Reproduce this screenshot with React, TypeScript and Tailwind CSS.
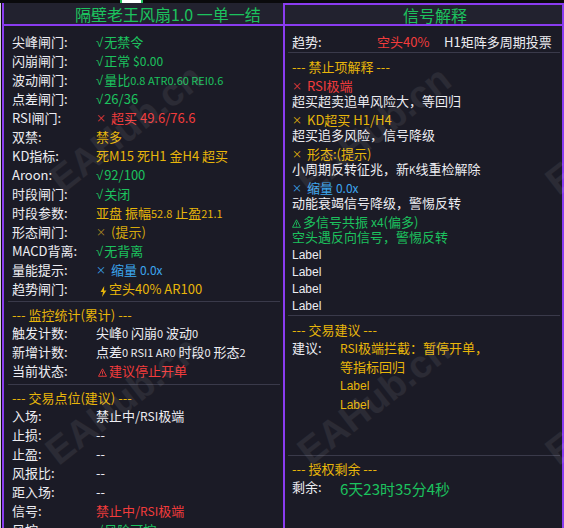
import React from 'react';

const WHITE = 'text-[#ededf2]';
const GREEN = 'text-[#1cc25e]';
const RED = 'text-[#f23c3c]';
const GOLD = 'text-[#e8b60a]';
const BLUE = 'text-[#3ba6ee]';

function X({ className = '' }: { className?: string }) {
  return <span className={`mr-[5px] text-[10px] ${className}`}>×</span>;
}

// thin radical-style check, as the terminal font draws it
function Ok() {
  return <span className="mr-px font-['Liberation_Sans',sans-serif] text-[13px]">√</span>;
}

function Warn({ className = '' }: { className?: string }) {
  return (
    <svg width="9" height="9" viewBox="0 0 9 9" className={`mr-[2px] translate-y-[2px] ${className}`}>
      <path d="M4.5 0.8 L8.5 8.3 H0.5 Z" fill="none" stroke="currentColor" strokeWidth="0.9" />
      <path d="M4.5 3.3 V6" stroke="currentColor" strokeWidth="0.9" />
      <circle cx="4.5" cy="7.1" r="0.5" fill="currentColor" />
    </svg>
  );
}

function Bolt() {
  return (
    <svg width="7" height="11" viewBox="0 0 7 11" className="ml-[4px] mr-[2px] translate-y-[3px]">
      <path d="M4.2 0 L0.6 6 H3 L2 11 L6.4 4.4 H4 Z" fill="#e8b60a" />
    </svg>
  );
}

function Row({ label, children }: { label: string; children: React.ReactNode }) {
  return (
    <div className="flex h-[19px] items-center pl-[8px]">
      <span className={`w-[84px] shrink-0 ${WHITE}`}>{label}</span>
      <div className="flex items-center whitespace-nowrap">{children}</div>
    </div>
  );
}

function SecHead({ children, pl = 'pl-[8px]' }: { children: React.ReactNode; pl?: string }) {
  return <div className={`flex h-[17px] items-center ${pl} ${GOLD}`}>{children}</div>;
}

function Watermark({ pos }: { pos: string }) {
  return (
    <span
      className={`absolute ${pos} -translate-x-1/2 -translate-y-1/2 -rotate-[38deg] whitespace-nowrap font-['Liberation_Sans',sans-serif] text-[38px] font-bold text-white/[0.07]`}
    >
      EAHub.cn
    </span>
  );
}

function LeftPanel() {
  return (
    <div className="w-[283px] overflow-hidden border-x-2 border-[#8a3cf0] bg-[#1b1b26]">
      <div className="flex h-[23px] items-center border-b-2 border-[#8a3cf0] bg-[#22222f] pl-[71px] text-[16px] text-[#1cc25e]">
        隔壁老王风扇1.0 一单一结
      </div>
      <div className="pt-[6px]">
        <Row label="尖峰闸门:">
          <span className={GREEN}>
            <Ok />
            无禁令
          </span>
        </Row>
        <Row label="闪崩闸门:">
          <span className={GREEN}>
            <Ok />
            正常 <span className="text-[12px]">$0.00</span>
          </span>
        </Row>
        <Row label="波动闸门:">
          <span className={GREEN}>
            <Ok />
            量比<span className="text-[11px]">0.8 ATR0.60 REI0.6</span>
          </span>
        </Row>
        <Row label="点差闸门:">
          <span className={GREEN}>
            <Ok />
            26/36
          </span>
        </Row>
        <Row label="RSI闸门:">
          <X className={RED} />
          <span className={RED}>超买 49.6/76.6</span>
        </Row>
        <Row label="双禁:">
          <span className={GOLD}>禁多</span>
        </Row>
        <Row label="KD指标:">
          <span className={GOLD}>死M15 死H1 金H4 超买</span>
        </Row>
        <Row label="Aroon:">
          <span className={GREEN}>
            <Ok />
            92/100
          </span>
        </Row>
        <Row label="时段闸门:">
          <span className={GREEN}>
            <Ok />
            关闭
          </span>
        </Row>
        <Row label="时段参数:">
          <span className={GOLD}>
            亚盘 振幅<span className="text-[11px]">52.8</span> 止盈<span className="text-[11px]">21.1</span>
          </span>
        </Row>
        <Row label="形态闸门:">
          <X className="text-[#b08c20]" />
          <span className="text-[#d6a90c]">(提示)</span>
        </Row>
        <Row label="MACD背离:">
          <span className={GREEN}>
            <Ok />
            无背离
          </span>
        </Row>
        <Row label="量能提示:">
          <X className={BLUE} />
          <span className={BLUE}>
            缩量 <span className="text-[12px]">0.0x</span>
          </span>
        </Row>
        <Row label="趋势闸门:">
          <Bolt />
          <span className={GOLD}>空头40% AR100</span>
        </Row>
      </div>
      <div className="mb-[4px] ml-[4px] mr-[3px] mt-[3px] h-px bg-[#3a3a4a]" />
      <SecHead>--- 监控统计(累计) ---</SecHead>
      <Row label="触发计数:">
        <span className={WHITE}>
          尖峰<span className="text-[11px]">0</span> 闪崩<span className="text-[11px]">0</span> 波动
          <span className="text-[11px]">0</span>
        </span>
      </Row>
      <Row label="新增计数:">
        <span className={WHITE}>
          点差<span className="text-[11px]">0 RSI1 AR0</span> 时段<span className="text-[11px]">0</span> 形态
          <span className="text-[11px]">2</span>
        </span>
      </Row>
      <Row label="当前状态:">
        <Warn className="ml-[2px] text-[#f23c3c]" />
        <span className={RED}>建议停止开单</span>
      </Row>
      <div className="mb-[4px] ml-[4px] mr-[3px] mt-[4px] h-px bg-[#3a3a4a]" />
      <SecHead>--- 交易点位(建议) ---</SecHead>
      <Row label="入场:">
        <span className={WHITE}>
          禁止中/<span className="text-[12px]">RSI</span>极端
        </span>
      </Row>
      <Row label="止损:">
        <span className={WHITE}>--</span>
      </Row>
      <Row label="止盈:">
        <span className={WHITE}>--</span>
      </Row>
      <Row label="风报比:">
        <span className={WHITE}>--</span>
      </Row>
      <Row label="距入场:">
        <span className={WHITE}>--</span>
      </Row>
      <Row label="信号:">
        <span className={RED}>
          禁止中/<span className="text-[12px]">RSI</span>极端
        </span>
      </Row>
      <Row label="风控:">
        <span className={GREEN}>
          <Ok />
          风险可控
        </span>
      </Row>
    </div>
  );
}

function Block({ title, desc }: { title: React.ReactNode; desc: React.ReactNode }) {
  return (
    <div className="mt-[4px] first:mt-0">
      <div className="flex h-[15px] items-center whitespace-nowrap">{title}</div>
      <div className="flex h-[15px] items-center whitespace-nowrap">{desc}</div>
    </div>
  );
}

function RightPanel() {
  return (
    <div className="w-[279px] overflow-hidden border-r-2 border-[#8a3cf0] bg-[#1b1b26]">
      <div className="flex h-[23px] items-center border-y-2 border-[#8a3cf0] bg-[#22222f] pl-[118px] text-[16px] text-[#1cc25e]">
        信号解释
      </div>
      <div className="pt-[6px]">
        <div className="flex h-[18px] items-center pl-[7px]">
          <span className={`w-[85px] shrink-0 ${WHITE}`}>趋势:</span>
          <span className={`w-[67px] shrink-0 ${RED}`}>空头40%</span>
          <span className={WHITE}>H1矩阵多周期投票</span>
        </div>
      </div>
      <div className="mb-[5px] ml-[3px] mr-[2px] mt-[2px] h-px bg-[#3a3a4a]" />
      <SecHead pl="pl-[7px]">--- 禁止项解释 ---</SecHead>
      <div className="mt-[3px] pl-[7px]">
        <Block
          title={
            <>
              <X className={RED} />
              <span className={RED}>RSI极端</span>
            </>
          }
          desc={<span className={WHITE}>超买超卖追单风险大，等回归</span>}
        />
        <Block
          title={
            <>
              <X className={GOLD} />
              <span className={GOLD}>KD超买 H1/H4</span>
            </>
          }
          desc={<span className={WHITE}>超买追多风险，信号降级</span>}
        />
        <Block
          title={
            <>
              <X className={GOLD} />
              <span className={GOLD}>形态:(提示)</span>
            </>
          }
          desc={
            <span className={WHITE}>
              小周期反转征兆，新<span className="text-[10px]">K</span>线重检解除
            </span>
          }
        />
        <Block
          title={
            <>
              <X className={BLUE} />
              <span className={BLUE}>
                缩量 <span className="text-[12px]">0.0x</span>
              </span>
            </>
          }
          desc={<span className={WHITE}>动能衰竭信号降级，警惕反转</span>}
        />
        <Block
          title={
            <>
              <Warn className="text-[#1cc25e]" />
              <span className={GREEN}>
                多信号共振 <span className="text-[12px]">x4</span>(偏多)
              </span>
            </>
          }
          desc={<span className={GREEN}>空头遇反向信号，警惕反转</span>}
        />
      </div>
      <div className="mt-[2px] pl-[7px] font-['Liberation_Sans',sans-serif] text-[12px]">
        {[0, 1, 2, 3].map((i) => (
          <div key={i} className={`flex h-[17px] items-center ${WHITE}`}>
            Label
          </div>
        ))}
      </div>
      <div className="mb-[5px] ml-[3px] mr-[2px] mt-[1px] h-px bg-[#3a3a4a]" />
      <SecHead pl="pl-[7px]">--- 交易建议 ---</SecHead>
      <div className="flex pl-[7px]">
        <span className={`flex h-[19px] w-[48px] shrink-0 items-center ${WHITE}`}>建议:</span>
        <div className={GOLD}>
          <div className="flex h-[19px] items-center whitespace-nowrap">
            <span className="text-[12px]">RSI</span>极端拦截：暂停开单，
          </div>
          <div className="flex h-[19px] items-center">等指标回归</div>
          <div className="flex h-[19px] items-center font-['Liberation_Sans',sans-serif] text-[12px]">Label</div>
          <div className="flex h-[19px] items-center font-['Liberation_Sans',sans-serif] text-[12px]">Label</div>
        </div>
      </div>
      <div className="mb-[4px] ml-[3px] mr-[2px] mt-[41px] h-px bg-[#3a3a4a]" />
      <SecHead pl="pl-[7px]">--- 授权剩余 ---</SecHead>
      <div className="flex h-[19px] items-center pl-[7px]">
        <span className={`w-[48px] shrink-0 ${WHITE}`}>剩余:</span>
        <span className={`translate-y-[2px] text-[15px] ${GREEN}`}>6天23时35分4秒</span>
      </div>
    </div>
  );
}

export default function App() {
  return (
    <div className="relative flex h-[528px] w-[564px] flex-col overflow-hidden bg-[#0a0a0c] font-['Noto_Sans_CJK_SC',sans-serif] text-[13px] leading-none">
      <div className="relative h-[3px] shrink-0">
        <div className="absolute left-[120px] top-0 h-[3px] w-[23px] border-x-2 border-[#22c55e] bg-white" />
      </div>
      <div className="flex min-h-0 flex-1">
        <div className="w-px bg-[#cfcfd6]" />
        <div className="w-px bg-[#0a0a0c]" />
        <LeftPanel />
        <RightPanel />
      </div>
      <div className="pointer-events-none absolute inset-0 overflow-hidden">
        <Watermark pos="left-[126px] top-[128px]" />
        <Watermark pos="left-[374px] top-[130px]" />
        <Watermark pos="left-[622px] top-[130px]" />
        <Watermark pos="left-[122px] top-[400px]" />
        <Watermark pos="left-[374px] top-[400px]" />
        <Watermark pos="left-[622px] top-[400px]" />
      </div>
    </div>
  );
}
